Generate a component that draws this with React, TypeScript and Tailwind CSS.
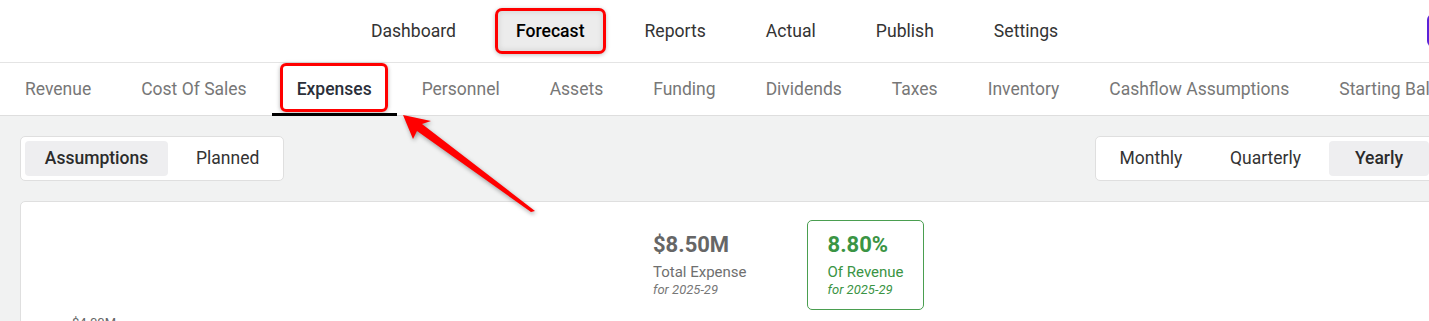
import React from "react";

const mainNav = ["Dashboard", "Forecast", "Reports", "Actual", "Publish", "Settings"];
const subTabs = [
  "Revenue",
  "Cost Of Sales",
  "Expenses",
  "Personnel",
  "Assets",
  "Funding",
  "Dividends",
  "Taxes",
  "Inventory",
  "Cashflow Assumptions",
  "Starting Balances",
];

const App = () => {
  return (
    <div className="relative w-[1429px] h-[321px] overflow-hidden bg-[#f1f2f2] font-['Roboto',sans-serif]">
      {/* top nav */}
      <header className="relative h-[63px] bg-white border-b border-[#e4e4e4] flex items-center justify-center">
        <nav className="flex items-center gap-5 text-[17.6px] text-[#333]">
          {mainNav.map((item) =>
            item === "Forecast" ? (
              <span
                key={item}
                className="-mx-px h-[46px] flex items-center px-[18px] rounded-[7px] border-[3px] border-[#ff0000] bg-[#ececec] font-medium text-black shadow-[0_1px_4px_rgba(0,0,0,0.25),inset_0_0_6px_rgba(0,0,0,0.12)]"
              >
                {item}
              </span>
            ) : (
              <span key={item} className="px-5">
                {item}
              </span>
            )
          )}
        </nav>
        <button className="absolute left-[1427px] top-[14px] w-[110px] h-[33px] rounded-md bg-[#5b22d8]" />
      </header>

      {/* sub tabs */}
      <div className="h-[53px] bg-white border-b border-[#dedede] flex items-stretch whitespace-nowrap text-[17.5px] text-[#777]">
        {subTabs.map((tab) =>
          tab === "Expenses" ? (
            <div key={tab} className="relative px-[25px] flex items-center font-medium text-[#2b2f3a]">
              <span className="absolute left-[8px] right-[9px] top-0 bottom-[3px] rounded-[6px] border-[3px] border-[#ff0000] shadow-[0_1px_4px_rgba(0,0,0,0.3)]" />
              <span className="relative">{tab}</span>
              <span className="absolute left-0 right-0 -bottom-px h-[3px] bg-black" />
            </div>
          ) : (
            <div key={tab} className="px-[25px] flex items-center">
              {tab}
            </div>
          )
        )}
      </div>

      {/* content */}
      <div className="w-[1454px] px-5 pt-5">
        <div className="flex justify-between">
          <div className="h-[45px] flex p-1 bg-white border border-[#dfdfdf] rounded-[5px] text-[17.5px] text-[#333]">
            <button className="w-[143px] rounded-[4px] bg-[#eeeef0] font-medium text-[#2b2b2b]">Assumptions</button>
            <button className="w-[111px] pl-[28px] text-left">Planned</button>
          </div>
          <div className="h-[45px] flex p-1 bg-white border border-[#dfdfdf] rounded-[5px] text-[17.5px] text-[#333]">
            <button className="w-[102px]">Monthly</button>
            <button className="w-[127px]">Quarterly</button>
            <button className="w-[100px] rounded-[4px] bg-[#eeeef0] font-medium text-[#2b2b2b]">Yearly</button>
          </div>
        </div>

        <div className="mt-5 h-[200px] bg-white border border-[#dfdfdf] rounded-[5px]">
          <div className="flex gap-[39px] pl-[611px] pt-[18px] whitespace-nowrap">
            <div className="border border-transparent px-5 py-[11px]">
              <div className="text-[22px] leading-[26px] font-bold text-[#666]">$8.50M</div>
              <div className="mt-1 text-[15px] leading-[20px] text-[#6f6f6f]">Total Expense</div>
              <div className="text-[13px] leading-[16px] italic text-[#777]">for 2025-29</div>
            </div>
            <div className="w-[117px] border border-[#4a9e50] rounded-[5px] pl-5 py-[11px]">
              <div className="text-[22px] leading-[26px] font-bold text-[#3a9444]">8.80%</div>
              <div className="mt-1 text-[15px] leading-[20px] text-[#3a9444]">Of Revenue</div>
              <div className="text-[13px] leading-[16px] italic text-[#3a9444]">for 2025-29</div>
            </div>
          </div>
          <div className="pl-[51px] mt-[3px] text-[13px] text-[#666]">$4.00M</div>
        </div>
      </div>

      {/* annotation arrow */}
      <svg
        className="absolute left-0 top-0 pointer-events-none drop-shadow-[1px_2px_2px_rgba(0,0,0,0.35)]"
        width="1429"
        height="321"
      >
        <polygon
          points="403,115 431,121 422,124 535,211 531,212 417,131 413,139"
          fill="#ff0000"
        />
      </svg>
    </div>
  );
};

export default App;
